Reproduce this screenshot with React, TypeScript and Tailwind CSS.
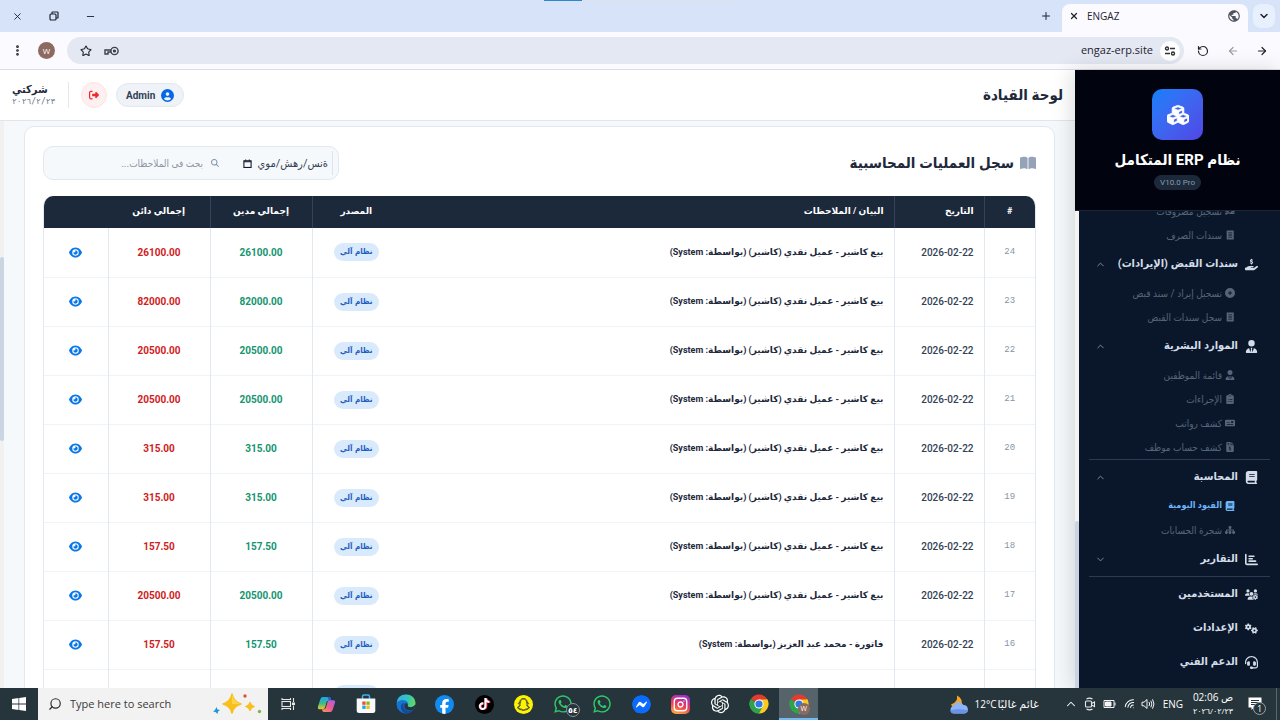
import type { ReactNode } from "react";
import type { IconType } from "react-icons";
import {
  FaBook,
  FaBookOpen,
  FaChartBar,
  FaCirclePlus,
  FaCircleUser,
  FaClipboardList,
  FaEye,
  FaFacebookF,
  FaFileInvoiceDollar,
  FaGears,
  FaHandHoldingDollar,
  FaHeadset,
  FaMagnifyingGlass,
  FaMoneyBillTransfer,
  FaMoneyCheck,
  FaRightFromBracket,
  FaSitemap,
  FaSnapchat,
  FaTiktok,
  FaUserTie,
  FaUsersGear,
  FaWhatsapp,
} from "react-icons/fa6";
import { FaCubes } from "react-icons/fa";
import { BsMessenger } from "react-icons/bs";
import { RiOpenaiFill } from "react-icons/ri";
import { MdPublic } from "react-icons/md";
import {
  ArrowLeft,
  ArrowRight,
  ChevronDown,
  ChevronUp,
  EllipsisVertical,
  Instagram,
  Minus,
  Plus,
  RotateCcw,
  Search,
  Star,
  Wifi,
  X,
} from "lucide-react";

/* ---------- Browser chrome ---------- */

function RestoreIcon() {
  return (
    <svg viewBox="0 0 10 10" className="size-[10px]" fill="none" stroke="#1f2430" strokeWidth="1.2">
      <rect x="1" y="3" width="6" height="6" rx="1" />
      <path d="M3 3V1.6Q3 1 3.6 1H8.4Q9 1 9 1.6V6.4Q9 7 8.4 7H7" />
    </svg>
  );
}

function KeyIcon() {
  return (
    <svg viewBox="0 0 15 10" className="h-[10px] w-[15px]" fill="none" stroke="#3c4048" strokeWidth="1.4">
      <circle cx="10.5" cy="5" r="3.6" />
      <circle cx="10.5" cy="5" r="0.9" fill="#3c4048" />
      <path d="M7 4H1V8H4V6H7" />
    </svg>
  );
}

function SiteInfoIcon() {
  return (
    <svg viewBox="0 0 12 10" className="h-[10px] w-3" fill="none" stroke="#2f333b" strokeWidth="1.4">
      <circle cx="3" cy="2.5" r="1.5" />
      <path d="M6 2.5H11M1 7.5H6" />
      <circle cx="9" cy="7.5" r="1.5" />
    </svg>
  );
}

function BrowserChrome() {
  return (
    <div className="relative shrink-0 font-['Open_Sans','DejaVu_Sans',sans-serif] text-[#1f2430]">
      <div className="absolute top-0 left-[544px] flex h-px w-[192px] bg-[#dbe2ec]" dir="ltr">
        <div className="w-[38px] bg-[#2f86cc]" />
      </div>
      <div className="flex h-8 items-stretch justify-between bg-[#d7e3f9]">
        <div className="flex items-end">
          <button aria-label="Search tabs" className="ms-[5px] me-[5px] mb-1 flex h-6 w-[22px] items-center justify-center rounded-lg bg-[#e9f0fd]">
            <ChevronDown className="size-3" strokeWidth={3} />
          </button>
          <div className="flex h-7 w-[186px] items-center gap-2 rounded-t-lg bg-[#fbfaff] px-[7px] pb-1 text-[10px]">
            <MdPublic className="size-[14px] text-[#50545c]" />
            <span className="flex-1 text-left">ENGAZ</span>
            <button aria-label="Close tab">
              <X className="size-[10px]" strokeWidth={3} />
            </button>
          </div>
          <button aria-label="New tab" className="mb-[10px] ms-[10px]">
            <Plus className="size-3" strokeWidth={2} />
          </button>
        </div>
        <div className="flex items-center gap-[26px] pe-3">
          <button aria-label="Minimize">
            <Minus className="size-[11px]" strokeWidth={2} />
          </button>
          <button aria-label="Restore">
            <RestoreIcon />
          </button>
          <button aria-label="Close window">
            <X className="size-[11px]" strokeWidth={2} />
          </button>
        </div>
      </div>
      <div className="flex h-[38px] items-center border-b border-[#dcdde5] bg-[#fbfaff]">
        <div className="flex w-24 items-center justify-between ps-3 pe-[13px]">
          <button aria-label="Back">
            <ArrowRight className="size-3" strokeWidth={2.4} />
          </button>
          <button aria-label="Forward" className="text-[#9a9da6]">
            <ArrowLeft className="size-3" strokeWidth={2.4} />
          </button>
          <button aria-label="Reload">
            <RotateCcw className="size-3" strokeWidth={2.4} />
          </button>
        </div>
        <div className="flex h-[27px] flex-1 items-center rounded-full bg-[#e3e8f3] pe-[13px] ps-1">
          <button aria-label="Site information" className="flex size-5 items-center justify-center rounded-full bg-white">
            <SiteInfoIcon />
          </button>
          <input
            aria-label="Address"
            dir="ltr"
            defaultValue="engaz-erp.site"
            className="mx-[7px] min-w-0 flex-1 bg-transparent text-right text-[11px] outline-none"
          />
          <div className="flex items-center gap-3">
            <KeyIcon />
            <Star className="size-3" strokeWidth={2.2} />
          </div>
        </div>
        <div className="flex items-center gap-[14px] pe-[11px] ps-3">
          <span className="flex size-[17px] items-center justify-center rounded-full bg-[#8d6a5f] text-[8px] text-white">W</span>
          <EllipsisVertical className="size-[13px]" strokeWidth={3} />
        </div>
      </div>
    </div>
  );
}

/* ---------- Sidebar ---------- */

function NavGroup({ icon: Icon, label, arrow }: { icon: IconType; label: string; arrow?: "up" | "down" }) {
  return (
    <button className="flex h-[34px] w-full items-center gap-1 ps-5 pe-4 text-[11px] font-bold text-[#d3dce8]">
      <span className="flex w-[18px] justify-center">
        <Icon className="size-[13px]" />
      </span>
      <span className="flex-1 whitespace-nowrap text-start">{label}</span>
      {arrow === "up" && <ChevronUp className="size-[11px] text-[#8592a6]" />}
      {arrow === "down" && <ChevronDown className="size-[11px] text-[#8592a6]" />}
    </button>
  );
}

function NavLink({ icon: Icon, label, active }: { icon: IconType; label: string; active?: boolean }) {
  return (
    <a
      href="#"
      className={
        active
          ? "flex h-6 items-center gap-[2px] ps-11 text-[9px] font-bold whitespace-nowrap text-[#6bb5f8]"
          : "flex h-6 items-center gap-[2px] ps-11 text-[10px] whitespace-nowrap text-[#566579]"
      }
    >
      <span className="flex w-3 justify-center">
        <Icon className="size-[10px]" />
      </span>
      {label}
    </a>
  );
}

function Receipt({ className }: { className?: string }) {
  return (
    <svg viewBox="0 0 12 12" className={className} fill="currentColor">
      <path fillRule="evenodd" d="M2 .5h8.5v11H2zM4 3v1h4.6V3zm0 2.5v1h4.6v-1zM4 8v1h4.6V8z" />
    </svg>
  );
}

function Divider() {
  return <hr className="mx-[10px] border-[#2c3b50]" />;
}

function Sidebar() {
  return (
    <aside className="relative z-10 flex w-[205px] shrink-0 flex-col shadow-[-3px_0_20px_rgba(0,0,0,0.14)]">
      <div className="flex h-[141px] shrink-0 flex-col items-center border-b border-[#1c2636] bg-[#01040f] pt-[19px]">
        <div className="flex size-[51px] items-center justify-center rounded-[10px] bg-linear-135 from-[#0a80fb] to-[#4f46e5]">
          <FaCubes className="size-[22px] stroke-white stroke-[18px] text-white" />
        </div>
        <h1 className="mt-2 text-[15px] leading-6 font-bold whitespace-nowrap text-white">نظام ERP المتكامل</h1>
        <span className="mt-[3px] rounded-full bg-[#1c293a] px-[6px] text-[8px] leading-[15px] text-[#8b9bb0]">V10.0 Pro</span>
      </div>
      <div className="flex min-h-0 flex-1 overflow-hidden bg-[#0a172a]">
        <nav className="-mt-3 min-w-0 flex-1">
          <NavLink icon={FaMoneyBillTransfer} label="تسجيل مصروفات" />
          <NavLink icon={Receipt} label="سندات الصرف" />
          <NavGroup icon={FaHandHoldingDollar} label="سندات القبض (الإيرادات)" arrow="up" />
          <NavLink icon={FaCirclePlus} label="تسجيل إيراد / سند قبض" />
          <NavLink icon={Receipt} label="سجل سندات القبض" />
          <NavGroup icon={FaUserTie} label="الموارد البشرية" arrow="up" />
          <NavLink icon={FaUserTie} label="قائمة الموظفين" />
          <NavLink icon={FaClipboardList} label="الإجراءات" />
          <NavLink icon={FaMoneyCheck} label="كشف رواتب" />
          <NavLink icon={FaFileInvoiceDollar} label="كشف حساب موظف" />
          <Divider />
          <NavGroup icon={FaBook} label="المحاسبة" arrow="up" />
          <NavLink icon={FaBook} label="القيود اليومية" active />
          <NavLink icon={FaSitemap} label="شجرة الحسابات" />
          <NavGroup icon={FaChartBar} label="التقارير" arrow="down" />
          <Divider />
          <NavGroup icon={FaUsersGear} label="المستخدمين" />
          <NavGroup icon={FaGears} label="الإعدادات" />
          <NavGroup icon={FaHeadset} label="الدعم الفني" />
        </nav>
        <div className="flex w-1 flex-col justify-end bg-[#f3f3f3]">
          <div className="h-[35%] rounded-t-sm bg-[#cbd5e1]" />
        </div>
      </div>
    </aside>
  );
}

/* ---------- Main panel ---------- */

function TopBar() {
  return (
    <header className="flex h-[51px] shrink-0 items-center justify-between border-b border-[#e2e6ea] bg-white ps-3 pe-3">
      <h2 className="text-[15px] font-bold text-[#1e293b]">لوحة القيادة</h2>
      <div className="flex items-center">
        <button className="flex h-6 items-center gap-[6px] rounded-full border border-[#e2e8f0] bg-[#eff3f8] px-[9px] text-[10px] font-bold text-[#334155]">
          <FaCircleUser className="size-[13px] text-[#0668e6]" />
          Admin
        </button>
        <button aria-label="تسجيل الخروج" className="ms-[9px] flex size-[26px] items-center justify-center rounded-full border border-[#fde3e3] bg-[#fef0f0] text-[#f02a2a]">
          <FaRightFromBracket className="size-[10px]" />
        </button>
        <div className="ms-3 flex h-[26px] w-[57px] flex-col justify-center border-s border-[#e2e8f0] text-end">
          <span className="text-[11px] leading-[13px] font-bold text-[#1e293b]">شركتي</span>
          <span dir="ltr" className="text-left font-['DejaVu_Sans_Mono',monospace] text-[8px] leading-[11px] text-[#64748b]">٢٠٢٦/٢/٢٣</span>
        </div>
      </div>
    </header>
  );
}

function Filters() {
  return (
    <div className="flex h-[34px] w-[296px] items-center rounded-[10px] border border-[#e2e8f0] bg-[#f6f9fc] px-[5px]">
      <label className="flex h-6 items-center border-s border-[#dfe5ec] ps-1">
        <span className="sr-only">التاريخ</span>
        <input placeholder="ةنس/رهش/موي" className="h-6 w-[74px] bg-transparent text-[11px] text-[#334155] outline-none placeholder:text-[#334155]" />
        <svg viewBox="0 0 10 10" className="ms-[2px] size-[9px]" fill="none" stroke="#111827" strokeWidth="1.2">
          <rect x="1" y="2" width="8" height="7.4" />
          <path d="M1 3H9M3 .5V2M7 .5V2" />
        </svg>
      </label>
      <label className="ms-6 flex flex-1 items-center gap-2">
        <FaMagnifyingGlass className="size-2 shrink-0 text-[#7e93ae]" />
        <span className="sr-only">بحث</span>
        <input placeholder="بحث في الملاحظات..." className="h-6 w-full min-w-0 bg-transparent text-[10px] outline-none placeholder:text-[#8c97a5]" />
      </label>
    </div>
  );
}

const CASHIER = "بيع كاشير - عميل نقدي (كاشير) (بواسطة: System)";

const rows = [
  { id: 24, note: CASHIER, amount: "26100.00" },
  { id: 23, note: CASHIER, amount: "82000.00" },
  { id: 22, note: CASHIER, amount: "20500.00" },
  { id: 21, note: CASHIER, amount: "20500.00" },
  { id: 20, note: CASHIER, amount: "315.00" },
  { id: 19, note: CASHIER, amount: "315.00" },
  { id: 18, note: CASHIER, amount: "157.50" },
  { id: 17, note: CASHIER, amount: "20500.00" },
  { id: 16, note: "فاتورة - محمد عبد العزيز (بواسطة: System)", amount: "157.50" },
  { id: 15, note: CASHIER, amount: "157.50" },
];

function Ledger() {
  return (
    <div className="mt-4 overflow-hidden rounded-t-[10px] border-x border-[#e2e8f0]">
      <table className="w-full table-fixed border-collapse font-['Roboto','DejaVu_Sans',sans-serif] text-[9px]">
        <colgroup>
          <col className="w-[51px]" />
          <col className="w-[90px]" />
          <col />
          <col className="w-[88px]" />
          <col className="w-[102px]" />
          <col className="w-[102px]" />
          <col className="w-[64px]" />
        </colgroup>
        <thead>
          <tr className="h-8 bg-[#1b293b] font-bold text-white">
            <th className="border-e border-[#34435a]">#</th>
            <th className="border-e border-[#34435a] px-[10px] text-start">التاريخ</th>
            <th className="px-[10px] text-start">البيان / الملاحظات</th>
            <th className="border-e border-[#34435a]">المصدر</th>
            <th className="border-e border-[#34435a]">إجمالي مدين</th>
            <th>إجمالي دائن</th>
            <th aria-label="عرض" />
          </tr>
        </thead>
        <tbody>
          {rows.map((row) => (
            <tr key={row.id} className="h-[49px] border-b border-[#f1f4f7] font-bold">
              <td className="border-e border-[#e2e8f0] text-center font-['Liberation_Mono',monospace] font-normal text-[#8795a8]">{row.id}</td>
              <td className="border-e border-[#e2e8f0] px-[10px] text-start text-[10px] font-medium text-[#334155]">
                <span dir="ltr">2026-02-22</span>
              </td>
              <td className="px-[10px] text-start whitespace-nowrap text-[#1e293b]">{row.note}</td>
              <td className="border-e border-[#e2e8f0] text-center">
                <span className="inline-block rounded-full bg-[#d9eafc] px-[6px] font-['DejaVu_Sans_Condensed','DejaVu_Sans',sans-serif] text-[8px] leading-[18px] whitespace-nowrap text-[#1f5fc0]">نظام آلي</span>
              </td>
              <td className="border-e border-[#e2e8f0] text-center text-[10px] text-[#159570]">{row.amount}</td>
              <td className="border-e border-[#e2e8f0] text-center text-[10px] text-[#d01c22]">{row.amount}</td>
              <td className="text-center">
                <button aria-label="عرض القيد" className="align-middle text-[#0a78e8]">
                  <FaEye className="size-[13px]" />
                </button>
              </td>
            </tr>
          ))}
        </tbody>
      </table>
    </div>
  );
}

function Main() {
  return (
    <div className="flex min-w-0 flex-1 flex-col">
      <TopBar />
      <div className="flex min-h-0 flex-1 overflow-hidden bg-[#f5f9fc]">
        <main className="min-w-0 flex-1 px-5 pt-[5px]">
          <section className="rounded-t-[10px] border border-[#e2e8f0] bg-white px-[18px] pt-[19px]">
            <div className="flex items-center justify-between">
              <h3 className="flex items-center gap-[6px] text-[15px] font-bold text-[#1e293b]">
                <FaBookOpen className="size-4 text-[#94a3b8]" />
                سجل العمليات المحاسبية
              </h3>
              <Filters />
            </div>
            <Ledger />
          </section>
        </main>
        <div className="w-1 bg-[#f1f1f1] pt-[136px]">
          <div className="h-[184px] rounded-sm bg-[#cbd5e1]" />
        </div>
      </div>
    </div>
  );
}

/* ---------- Taskbar ---------- */

function WindowsLogo() {
  return (
    <svg viewBox="0 0 14 14" className="size-[14px]" fill="#fff">
      <path d="M0 2L6.5 1V6.6H0zM7.2 .9L14 0V6.6H7.2zM0 7.4H6.5V13L0 12zM7.2 7.4H14V14L7.2 13.1z" />
    </svg>
  );
}

function Sparkles() {
  return (
    <svg viewBox="0 0 50 22" className="h-[22px] w-[50px]">
      <path d="M20 1Q21.5 9 29 11Q21.5 13 20 20Q18.5 13 11 11Q18.5 9 20 1Z" fill="#f9bf1d" stroke="#f9bf1d" strokeWidth="1.5" strokeLinejoin="round" />
      <path d="M20 1Q21.5 9 29 11L20 11Z" fill="#fdd54a" />
      <path d="M38 9Q38.8 12.5 42.5 13.5Q38.8 14.5 38 18Q37.2 14.5 33.5 13.5Q37.2 12.5 38 9Z" fill="#f9bf1d" stroke="#f9bf1d" strokeLinejoin="round" />
      <path d="M4.5 14L5.5 16.5L8 17L6 18.5L5.5 21L3.5 19L1 18.5L3 17Z" fill="#1797d8" />
      <circle cx="33" cy="3" r="1.7" fill="#dd5632" />
      <circle cx="47.5" cy="18.5" r="1.7" fill="#7cb740" />
    </svg>
  );
}

function TaskViewIcon() {
  return (
    <svg viewBox="0 0 14 14" className="size-[14px]" fill="none" stroke="#e6e9ea" strokeWidth="1.1">
      <rect x="1" y="4.5" width="8.5" height="5" />
      <path d="M1 1V2.5H9.5V1M1 13V11.5H9.5V13M12.5 1V5M12.5 8.5V13" />
      <path d="M11.5 6H13.5V7.5H11.5Z" fill="#e6e9ea" />
    </svg>
  );
}

function CopilotIcon() {
  return (
    <svg viewBox="0 0 20 20" className="size-[19px]">
      <defs>
        <linearGradient id="cp1" x1="0" y1="0" x2="0" y2="1">
          <stop offset="0" stopColor="#1aa5f5" />
          <stop offset=".5" stopColor="#36b98c" />
          <stop offset="1" stopColor="#f0c81e" />
        </linearGradient>
        <linearGradient id="cp2" x1="1" y1="0" x2="0" y2="1">
          <stop offset="0" stopColor="#a65cf0" />
          <stop offset=".5" stopColor="#ee5a92" />
          <stop offset="1" stopColor="#f99a4c" />
        </linearGradient>
      </defs>
      <path d="M6 2H12.5Q14 2 14.5 4L15 6H12Q10.5 6 10 8L8.5 13Q8 15 6 15H3Q.5 15 1 12L3.5 4.5Q4.3 2 6 2Z" fill="url(#cp1)" />
      <path d="M14 18H7.5Q6 18 5.5 16L5.2 15H7Q9 15 9.6 12.5L11 7.5Q11.5 5.5 14 5.5H17Q19.5 5.5 19 8L16.5 15.5Q15.7 18 14 18Z" fill="url(#cp2)" />
      <path d="M11 2H12.5Q14 2 14.5 4L15 5.6H12.2Z" fill="#2364d8" />
    </svg>
  );
}

function StoreIcon() {
  return (
    <svg viewBox="0 0 20 20" className="size-5">
      <path d="M6.5 5V2.5Q6.5 1 8 1H12Q13.5 1 13.5 2.5V5" fill="none" stroke="#3ab3ee" strokeWidth="1.5" />
      <path d="M.7 4.5H19.3V16.5Q19.3 19 16.8 19H3.2Q.7 19 .7 16.5Z" fill="#f8f9fa" />
      <path d="M6.3 7.5H9.6V10.8H6.3Z" fill="#f05123" />
      <path d="M10.4 7.5H13.7V10.8H10.4Z" fill="#80b927" />
      <path d="M6.3 11.6H9.6V14.9H6.3Z" fill="#18a5ea" />
      <path d="M10.4 11.6H13.7V14.9H10.4Z" fill="#fbb90d" />
    </svg>
  );
}

function EdgeIcon() {
  return (
    <svg viewBox="0 0 20 20" className="size-5">
      <defs>
        <linearGradient id="ed1" x1="0" y1=".3" x2="1" y2=".5">
          <stop offset="0" stopColor="#2fb2ec" />
          <stop offset=".6" stopColor="#35c8b4" />
          <stop offset="1" stopColor="#68d758" />
        </linearGradient>
      </defs>
      <circle cx="10" cy="10" r="9.5" fill="#1673cf" />
      <path d="M.6 9Q1.5 .6 10 .5Q18.5 .8 19.5 8.5Q19.5 13 15 13.2Q11.5 13.2 11.7 11.8Q13 10 11.5 8Q9 5.5 5 6.3Q1.5 7 .6 9Z" fill="url(#ed1)" />
      <path d="M8 9Q6.5 11 8 14Q10.5 18 17 16.3Q14.5 19.6 10.5 19.5Q5 18.5 4.8 13Q5 9.5 8 9Z" fill="#124a9d" />
      <path d="M11.7 11.8Q11.3 13.3 15 13.2Q18 13 19.3 10.6Q19.2 13.8 17 16.3Q11 17.5 8.6 14Q7.5 11 9 9.3Q12.3 9 11.7 11.8Z" fill="#26343b" />
    </svg>
  );
}

function ChromeIcon() {
  return (
    <svg viewBox="0 0 20 20" className="size-5">
      <path d="M10 10L1.77 5.25A9.5 9.5 0 0 1 18.23 5.25Z" fill="#e53b2e" />
      <path d="M10 10L18.23 5.25A9.5 9.5 0 0 1 10 19.5Z" fill="#fcc91f" />
      <path d="M10 10V19.5A9.5 9.5 0 0 1 1.77 5.25Z" fill="#2ea24c" />
      <path d="M10 5.5H18.3L18.7 6.4L14 12.2L10 19.5Z" fill="#fcc91f" />
      <path d="M1.77 5.25L6 12.3L10 14.5L14 12.2L10 19.5A9.5 9.5 0 0 1 1.77 5.25Z" fill="#2ea24c" />
      <circle cx="10" cy="10" r="4.6" fill="#fff" />
      <circle cx="10" cy="10" r="3.6" fill="#2f78e8" />
    </svg>
  );
}

function WeatherIcon() {
  return (
    <svg viewBox="0 0 20 19" className="h-[19px] w-5">
      <path d="M8 .5Q9 7 2 9.5Q4 13.5 9 12.5Q14 10.5 12.5 5Q11 1.5 8 .5Z" fill="#f6a623" />
      <path d="M4.5 18.5A4 4 0 0 1 4.5 10.8A5.5 5.5 0 0 1 14.5 10A4.3 4.3 0 0 1 15.5 18.5Z" fill="#8db4f4" />
      <path d="M1 15.5Q9 13 19.3 15.5Q18 18.5 15.5 18.5H4.5Q1.8 18.3 1 15.5Z" fill="#6a93e6" />
    </svg>
  );
}

function CastIcon() {
  return (
    <svg viewBox="0 0 12 14" className="h-[14px] w-3" fill="none" stroke="#e6e9ea" strokeWidth="1.1">
      <rect x="1.5" y="4" width="6" height="6" rx="1" />
      <path d="M7.5 6.5L10.5 5V9.5L7.5 8M2.5 2Q5.5 .2 8.5 2M2.5 12Q5.5 13.8 8.5 12" />
    </svg>
  );
}

function BatteryIcon() {
  return (
    <svg viewBox="0 0 13 8" className="h-2 w-[13px]" fill="none" stroke="#f2f4f5" strokeWidth="1">
      <path d="M1 .5H11V7.5H1ZM12 2.5V5.5" />
      <path d="M2.5 2H8V6H2.5Z" fill="#f2f4f5" />
    </svg>
  );
}

function VolumeIcon() {
  return (
    <svg viewBox="0 0 14 12" className="h-3 w-[14px]" fill="none" stroke="#f2f4f5" strokeWidth="1">
      <path d="M1 4.2H3L6 1.5V10.5L3 7.8H1ZM8 4Q9.3 6 8 8M9.8 2.7Q12 6 9.8 9.3M11.5 1.3Q14.5 6 11.5 10.7" />
    </svg>
  );
}

function Notice() {
  return (
    <button aria-label="Notifications" className="relative flex size-5 items-center justify-center">
      <svg viewBox="0 0 14 14" className="size-[14px]">
        <path d="M.5 .5H13.5V10.5H6L3.5 13V10.5H.5Z" fill="#fff" />
        <path d="M3 3.5H11M3 5.5H11M3 7.5H8" stroke="#26343b" />
      </svg>
      <span className="absolute top-2 left-2 flex size-[13px] items-center justify-center rounded-full border border-[#9aa2a6] bg-[#26343b] text-[9px] text-white">1</span>
    </button>
  );
}

function Disc({ className, children }: { className: string; children: ReactNode }) {
  return <span className={`flex size-[19px] items-center justify-center ${className}`}>{children}</span>;
}

function Taskbar() {
  const apps: { name: string; icon: ReactNode; active?: boolean }[] = [
    { name: "Task view", icon: <TaskViewIcon /> },
    { name: "Copilot", icon: <CopilotIcon /> },
    { name: "Store", icon: <StoreIcon /> },
    { name: "Edge", icon: <EdgeIcon /> },
    {
      name: "Facebook",
      icon: (
        <Disc className="overflow-hidden rounded-full bg-[#128bf0] pt-1">
          <FaFacebookF className="size-[15px] text-white" />
        </Disc>
      ),
    },
    {
      name: "TikTok",
      icon: (
        <Disc className="rounded-full bg-black">
          <FaTiktok className="size-3 text-white drop-shadow-[1px_0_0_#f5385d]" />
        </Disc>
      ),
    },
    {
      name: "Snapchat",
      icon: (
        <Disc className="rounded-full bg-[#fdf500]">
          <FaSnapchat className="size-[13px] fill-white stroke-black stroke-[24px]" />
        </Disc>
      ),
    },
    {
      name: "WhatsApp",
      icon: (
        <span className="relative">
          <FaWhatsapp className="size-5 text-[#2fc866]" />
          <span className="absolute top-[9px] left-[13px] flex size-[14px] items-center justify-center rounded-full border border-[#8c9498] bg-[#26343b] text-[8px] font-bold text-white">٥٤</span>
        </span>
      ),
    },
    { name: "WhatsApp Business", icon: <FaWhatsapp className="size-5 text-[#2fc866]" /> },
    {
      name: "Messenger",
      icon: (
        <Disc className="rounded-full">
          <BsMessenger className="size-[19px] rounded-full bg-[radial-gradient(white_45%,transparent_46%)] text-[#0a6bff]" />
        </Disc>
      ),
    },
    {
      name: "Instagram",
      icon: (
        <Disc className="rounded-[5px] bg-linear-[20deg,#fdb03c_5%,#ee3e56_45%,#a22fc4_85%]">
          <Instagram className="size-[15px] text-white" strokeWidth={2.2} />
        </Disc>
      ),
    },
    { name: "ChatGPT", icon: <RiOpenaiFill className="size-[22px] text-white" /> },
    { name: "Chrome", icon: <ChromeIcon /> },
    {
      name: "Chrome profile",
      active: true,
      icon: (
        <span className="relative">
          <ChromeIcon />
          <span className="absolute top-[9px] left-[9px] flex size-3 items-center justify-center rounded-full bg-[#8d6a5f] text-[7px] text-white">W</span>
        </span>
      ),
    },
  ];
  return (
    <footer dir="ltr" className="relative z-20 flex h-8 shrink-0 items-stretch bg-[#26343b] font-['Open_Sans','DejaVu_Sans',sans-serif] text-white">
      <button aria-label="Start" className="flex w-[38px] items-center justify-center">
        <WindowsLogo />
      </button>
      <label className="flex w-[230px] items-center bg-[#f2f2f2] ps-[10px] pe-[6px]">
        <Search className="size-[14px] -scale-x-100 text-[#2b2b2b]" strokeWidth={2} />
        <span className="sr-only">Search</span>
        <input placeholder="Type here to search" className="ms-2 min-w-0 flex-1 bg-transparent text-[11px] text-[#333] outline-none placeholder:text-[#3a3a3a]" />
        <Sparkles />
      </label>
      <div className="flex w-[43%] items-stretch">
        {apps.map((app) => (
          <button
            key={app.name}
            aria-label={app.name}
            className={
              app.active
                ? "flex flex-1 items-center justify-center border-b-2 border-[#76b9ed] bg-[#56636a] pt-[2px]"
                : "flex flex-1 items-center justify-center"
            }
          >
            {app.icon}
          </button>
        ))}
      </div>
      <div className="ms-auto flex items-center text-[10px]">
        <WeatherIcon />
        <span className="ms-[6px]">12°C</span>
        <span dir="rtl" className="ms-2 w-[43px] text-center text-[11px] whitespace-nowrap">غائم غالبًا</span>
        <ChevronUp className="ms-4 size-[14px]" strokeWidth={1.8} />
        <span className="ms-[6px]"><CastIcon /></span>
        <span className="ms-[7px]"><BatteryIcon /></span>
        <Wifi className="ms-2 size-[13px] rotate-[-40deg]" strokeWidth={1.8} />
        <span className="ms-1"><VolumeIcon /></span>
        <span className="ms-2">ENG</span>
        <div className="ms-[6px] flex w-12 flex-col items-center leading-[14px]">
          <span dir="rtl">ص 02:06</span>
          <span dir="ltr" className="text-[8px]">٢٠٢٦/٠٢/٢٣</span>
        </div>
        <div className="me-[11px] ms-2"><Notice /></div>
        <div className="me-[3px] h-full w-px bg-[#59666c]" />
      </div>
    </footer>
  );
}

export default function App() {
  return (
    <div dir="rtl" className="flex h-screen flex-col overflow-hidden bg-white font-['Roboto','DejaVu_Sans_Condensed','DejaVu_Sans',sans-serif]">
      <BrowserChrome />
      <div className="flex min-h-0 flex-1">
        <Sidebar />
        <Main />
      </div>
      <Taskbar />
    </div>
  );
}
